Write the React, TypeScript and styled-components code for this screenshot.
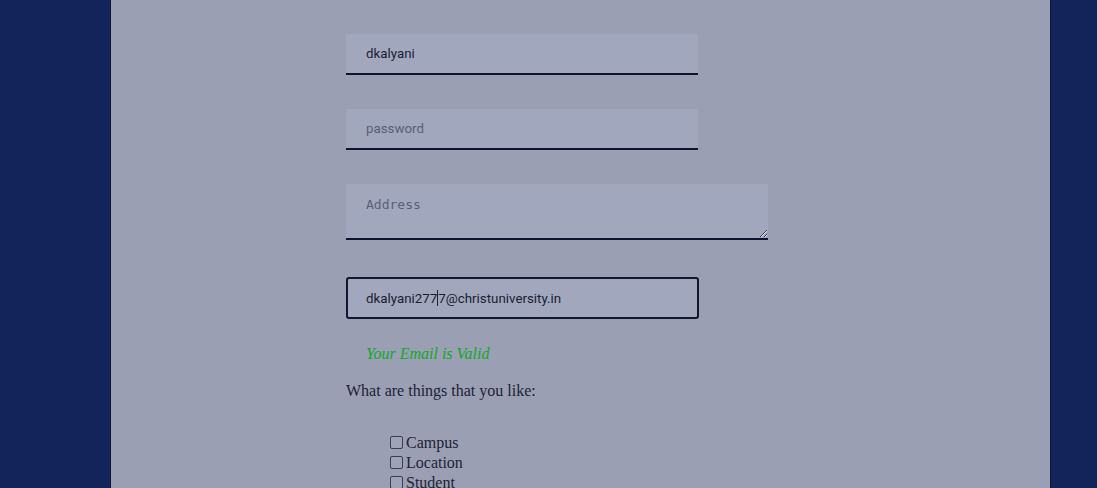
import React from "react";
import styled, { createGlobalStyle } from "styled-components";

const Global = createGlobalStyle`
  html, body { margin: 0; padding: 0; background: #13245a; height: 488px; overflow: hidden; }
`;

const Page = styled.div`
  display: flex;
  min-height: 488px;
  padding-left: 110px;
`;

const Panel = styled.div`
  width: 941px;
  flex: none;
  box-sizing: border-box;
  background: #9a9fb4;
  border-left: 1px solid #0e1633;
  border-right: 1px solid #0e1633;
  padding: 34px 0 0 235px;
  display: flex;
  flex-direction: column;
  align-items: flex-start;
  & > * { flex-shrink: 0; }
`;

const TextField = styled.input`
  width: 352px;
  height: 41px;
  box-sizing: border-box;
  border: none;
  border-bottom: 2px solid #0f1530;
  background: #a1a7bd;
  padding: 0 20px;
  font: 13.333px Roboto, "Liberation Sans", sans-serif;
  color: #1e2236;
  margin-bottom: 34px;
  outline: none;
  &::placeholder { color: #5b6078; }
`;

const AddressArea = styled.textarea`
  width: 422px;
  height: 56px;
  box-sizing: border-box;
  border: none;
  border-bottom: 2px solid #0f1530;
  background: #a1a7bd;
  padding: 13px 20px;
  font: 13px "DejaVu Sans Mono", monospace;
  color: #1e2236;
  margin: 0 0 37px;
  outline: none;
  display: block;
  &::placeholder { color: #5b6078; }
`;

const EmailBox = styled.div`
  width: 353px;
  height: 42px;
  box-sizing: border-box;
  border: 2px solid #11172f;
  border-radius: 3px;
  background: #a1a7bd;
  padding: 0 18px;
  display: flex;
  align-items: center;
  font: 13.333px Roboto, "Liberation Sans", sans-serif;
  color: #1a1e31;
`;

const Caret = styled.span`
  display: inline-block;
  width: 1px;
  height: 16px;
  background: #1e2236;
`;

const Valid = styled.p`
  margin: 26px 0 0 20px;
  font: italic 16px "Liberation Serif", serif;
  color: #12a82a;
`;

const Question = styled.p`
  margin: 19px 0 0 0;
  font: 16px "Liberation Serif", serif;
  color: #1e2236;
`;

const Options = styled.div`
  margin-top: 33px;
  padding-left: 40px;
  display: flex;
  flex-direction: column;
`;

const Option = styled.label`
  display: flex;
  align-items: center;
  height: 20px;
  font: 16px "Liberation Serif", serif;
  color: #1e2236;
`;

const Box = styled.span`
  width: 13px;
  height: 13px;
  box-sizing: border-box;
  border: 1px solid #3a3f55;
  border-radius: 2px;
  background: #9ea3b8;
  margin: 0 3px 2px 4px;
`;

export default function App() {
  return (
    <>
      <Global />
      <Page>
        <Panel>
          <TextField defaultValue="dkalyani" readOnly />
          <TextField placeholder="password" type="password" readOnly />
          <AddressArea placeholder="Address" readOnly />
          <EmailBox>
            dkalyani277<Caret />7@christuniversity.in
          </EmailBox>
          <Valid>Your Email is Valid</Valid>
          <Question>What are things that you like:</Question>
          <Options>
            {["Campus", "Location", "Student"].map((o) => (
              <Option key={o}>
                <Box />
                {o}
              </Option>
            ))}
          </Options>
        </Panel>
      </Page>
    </>
  );
}
